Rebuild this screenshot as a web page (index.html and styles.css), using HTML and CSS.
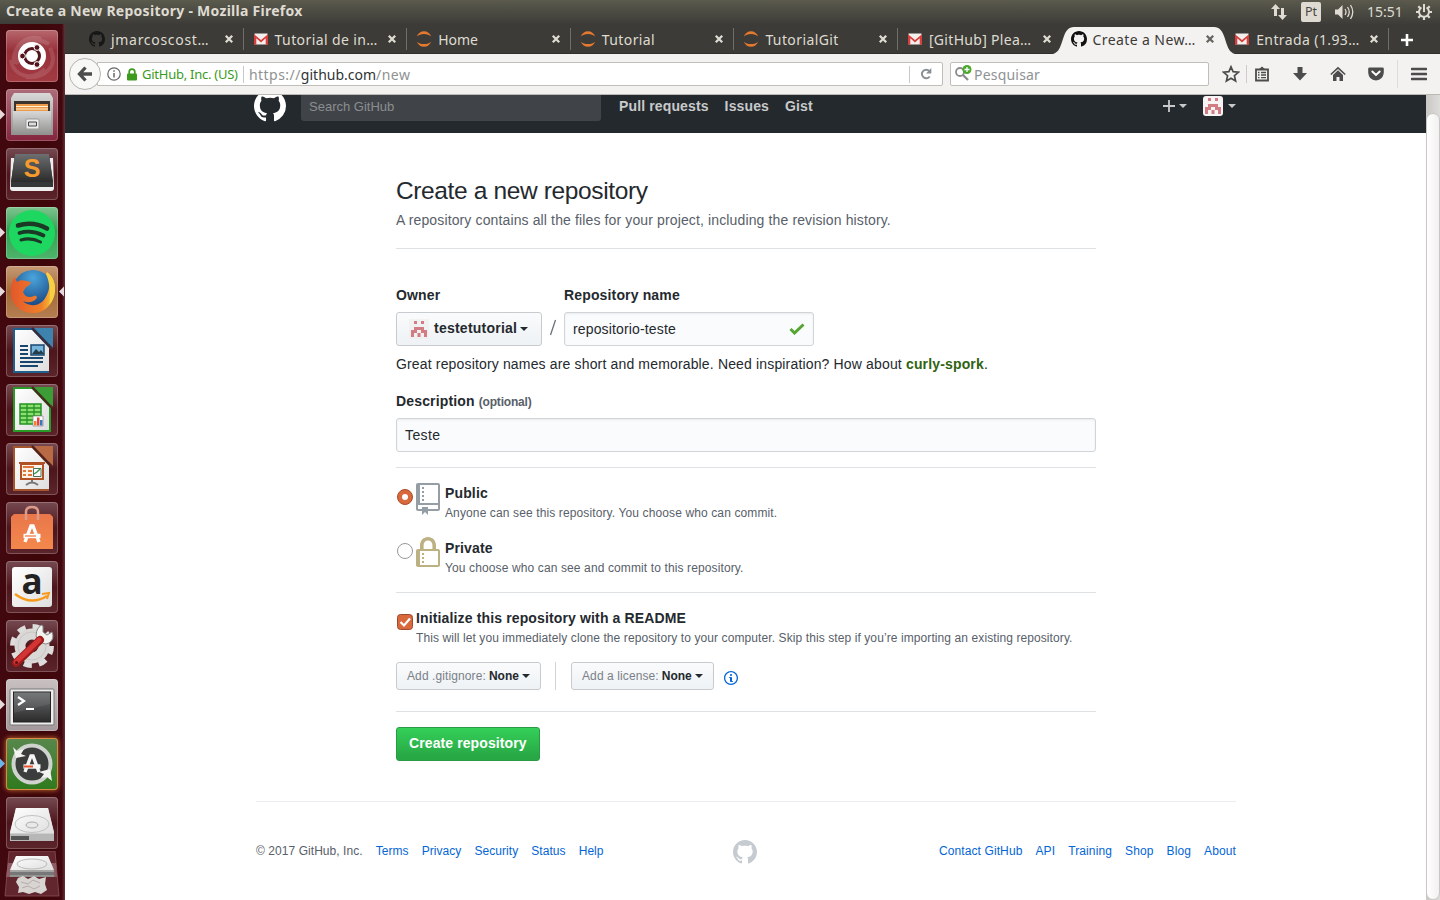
FILE: index.html
```html
<!DOCTYPE html>
<html lang="pt">
<head>
<meta charset="utf-8">
<title>Create a New Repository</title>
<link rel="stylesheet" href="styles.css">
</head>
<body>
<svg class="defs" width="0" height="0">
  <defs>
    <symbol id="octocat" viewBox="0 0 16 16"><path d="M8 0C3.58 0 0 3.58 0 8c0 3.54 2.29 6.53 5.47 7.59.4.07.55-.17.55-.38 0-.19-.01-.82-.01-1.49-2.01.37-2.53-.49-2.69-.94-.09-.23-.48-.94-.82-1.13-.28-.15-.68-.52-.01-.53.63-.01 1.08.58 1.23.82.72 1.21 1.87.87 2.33.66.07-.52.28-.87.51-1.07-1.78-.2-3.64-.89-3.64-3.95 0-.87.31-1.59.82-2.15-.08-.2-.36-1.02.08-2.12 0 0 .67-.21 2.2.82.64-.18 1.32-.27 2-.27.68 0 1.36.09 2 .27 1.53-1.04 2.2-.82 2.2-.82.44 1.1.16 1.92.08 2.12.51.56.82 1.27.82 2.15 0 3.07-1.87 3.75-3.65 3.95.29.25.54.73.54 1.48 0 1.07-.01 1.93-.01 2.2 0 .21.15.46.55.38A8.013 8.013 0 0 0 16 8c0-4.42-3.58-8-8-8z"/></symbol>
    <symbol id="gmail" viewBox="0 0 16 16"><rect x="1.5" y="2.5" width="13" height="11" fill="#f3efec"/><path d="M1 13.7V3.2L8 9l7-5.800v10.500h-2.300V7.200L8 11.500 3.300 7.200v6.500z" fill="#d63f3d"/></symbol>
    <symbol id="jupyter" viewBox="0 0 16 16"><path d="M.8 5.5C2 2.200 4.800.2 8 .2s6 2 7.200 5.300C13.500 3.700 11 2.900 8 2.900S2.500 3.700.8 5.500zM.8 10.500C2 13.800 4.800 15.800 8 15.800s6-2 7.200-5.300c-1.700 1.800-4.200 2.600-7.200 2.600s-5.500-.8-7.200-2.600z" fill="#e5792f"/></symbol>
    <symbol id="close" viewBox="0 0 10 10"><path d="M1.800 1.800l6.400 6.400M8.200 1.800L1.800 8.200" stroke="currentColor" stroke-width="2.300" fill="none"/></symbol>
    <symbol id="identicon" viewBox="0 0 20 20"><path fill="#d27d84" d="M5 2h3v3H5zM12 2h3v3h-3zM5 8h10v3H5zM2 11h6v3H2zM12 11h6v3h-6zM2 14h3v4H2zM8.500 14h3v4h-3zM15 14h3v4h-3z"/></symbol>
    <linearGradient id="paper" x1="0" y1="0" x2="1" y2="1"><stop offset="0" stop-color="#fff"/><stop offset="1" stop-color="#dedede"/></linearGradient>
    <linearGradient id="steel" x1="0" y1="0" x2="0" y2="1"><stop offset="0" stop-color="#d8d8d8"/><stop offset="1" stop-color="#8f8f8d"/></linearGradient>
    <linearGradient id="dark" x1="0" y1="0" x2="0" y2="1"><stop offset="0" stop-color="#6c6e70"/><stop offset="1" stop-color="#2b2b2b"/></linearGradient>
    <linearGradient id="orange" x1="0" y1="0" x2="0" y2="1"><stop offset="0" stop-color="#e9764a"/><stop offset="1" stop-color="#f4884c"/></linearGradient>
    <radialGradient id="globe" cx=".5" cy=".2" r=".8"><stop offset="0" stop-color="#4aa5dc"/><stop offset="1" stop-color="#123a78"/></radialGradient>
    <linearGradient id="fox" x1="0" y1="0" x2="1" y2="0"><stop offset="0" stop-color="#e4572b"/><stop offset=".7" stop-color="#ee8129"/><stop offset="1" stop-color="#fbd33b"/></linearGradient>
    <symbol id="drive" viewBox="0 0 52 52"><path d="M10 11h32l6 24v8H4v-8z" fill="#cfcfcf"/><path d="M10 11h32l6 25H4z" fill="url(#paper)"/><ellipse cx="26" cy="27" rx="17" ry="8.500" fill="none" stroke="#c2c2c2"/><ellipse cx="26" cy="28" rx="6" ry="3" fill="#e8e8e8" stroke="#aaa"/><path d="M4 37h44v7H4z" fill="#b7b7b7"/><path d="M5 39h18v4H5z" fill="#555"/></symbol>
  </defs>
</svg>

<header class="panel">
  <span class="panel-title">Create a New Repository - Mozilla Firefox</span>
  <div class="indicators">
    <svg class="ind-net" width="18" height="18" viewBox="0 0 18 18" fill="#dfdbd2"><path d="M5.500 1L10 6H7v7H4V6H1zM12.500 17L8 12h3V5h3v7h3z"/></svg>
    <span class="kbd">Pt</span>
    <svg class="ind-vol" width="21" height="18" viewBox="0 0 21 18"><path d="M1 6.500h3L8.500 2v14L4 11.500H1z" fill="#dfdbd2"/><path d="M11 6q2 3 0 6M13.500 4q3.500 5 0 10M16.500 2q4.500 7 0 14" fill="none" stroke="#dfdbd2" stroke-width="1.300"/></svg>
    <span class="clock">15:51</span>
    <svg class="ind-gear" width="18" height="18" viewBox="0 0 18 18" fill="none" stroke="#dfdbd2"><path d="M6.500 4.500a5 5 0 1 0 5 0M9 1v8" stroke-width="2"/><path d="M1 9h3M14 9h3M3.300 3.300l2 2M14.700 3.300l-2 2M3.300 14.700l2-2M14.700 14.700l-2-2M9 14v3" stroke-width="2.200"/></svg>
  </div>
</header>

<div class="desktop">
  <nav class="launcher">
    <svg class="tile t-dash" viewBox="0 0 52 52"><g fill="none" stroke="#fff" stroke-opacity=".12" stroke-width="4"><path d="M8 34C5 14 24 4 43 14M44 18c9 18-5 31-24 29M35 9c-18-6-31 12-23 25M39 39C26 52 7 46 5 30"/></g><circle cx="26" cy="26" r="14" fill="#fff"/><circle cx="26" cy="26" r="7.500" fill="none" stroke="#53141c" stroke-width="3"/><g fill="#53141c" stroke="#fff"><circle cx="16.500" cy="26" r="2.900"/><circle cx="31" cy="17.500" r="2.900"/><circle cx="31" cy="34.500" r="2.900"/></g></svg>
    <svg class="tile t-files" viewBox="0 0 52 52"><path d="M-6 20.500l5 5-5 5z" fill="#e6d9db"/><path d="M8 4h36l3 5v37H5V9z" fill="url(#steel)"/><path d="M8 12h36v12H8z" fill="#3b332e"/><path d="M10 15h32v7H10z" fill="#ec9a4c"/><path d="M10 17.500h32M10 20h32" stroke="#fff0cf" stroke-width="1.200"/><path d="M7 22h38v24H7z" fill="url(#steel)"/><rect x="20" y="30" width="13" height="10" rx="1" fill="#eee" stroke="#999"/><path d="M22.500 33h8v4h-8z" fill="#ddd" stroke="#444"/></svg>
    <svg class="tile t-sublime" viewBox="0 0 52 52"><path d="M5 10h42l1 30q0 3-3 3H7q-3 0-3-3z" fill="#eee"/><path d="M9 6h34l4 29v4H5v-4z" fill="#343638"/><path d="M9 6h34l4 28H5z" fill="url(#dark)"/><text x="26" y="29" class="ico-s">S</text></svg>
    <svg class="tile t-spotify" viewBox="0 0 52 52"><path d="M-6 20.500l5 5-5 5z" fill="#e6d9db"/><circle cx="26" cy="26" r="23" fill="#1ed760"/><g fill="none" stroke="#1b3a26" stroke-linecap="round"><path d="M12 18.500q15-4.500 29 3" stroke-width="4.600"/><path d="M13.500 26q12-3.500 24 2.500" stroke-width="3.800"/><path d="M15 33q10-3 19.500 2" stroke-width="3"/></g></svg>
    <svg class="tile t-firefox" viewBox="0 0 52 52"><path d="M-6 20.500l5 5-5 5zM58 20.500l-5 5 5 5z" fill="#e6d9db"/><circle cx="27" cy="24" r="20" fill="url(#globe)"/><path d="M41 6c8 6 10 17 6 27-4 9-12 15-21 14C12 46 4 36 5 24c0-6 2-10 4-13l2 5c3-2 6-2 9-1l5 1c-1 3-3 4-5 5l-3 5c2 5 6 6 11 4 2-1 4 1 2 3-4 4-9 4-13 2 4 5 14 6 20 0 6-7 9-18 4-29z" fill="url(#fox)"/><path d="M41 6c8 6 10 17 6 27q-1 3-4 6c2-10 1-22-3-31z" fill="#f8cf42"/></svg>
    <svg class="tile t-doc" viewBox="0 0 52 52"><path d="M7 3h36v45H7z" fill="#1d5f8d"/><path d="M28 3h19v20z" fill="#3d83ad"/><path d="M9 5h17l17 18v23H9z" fill="url(#paper)"/><path d="M26 3l20 21" stroke="#3c2a38" stroke-width="2.500"/><g stroke="#17476f" stroke-width="2"><path d="M14 21h8M14 25h8M14 29h8M14 33h23M14 37h23M14 41h18"/></g><path d="M25 20h13v10H25z" fill="#76b4dc" stroke="#17476f" stroke-width="1.500"/><path d="M26 29l4-5 3 3 2-2 3 4z" fill="#243d48"/></svg>
    <svg class="tile t-doc" viewBox="0 0 52 52"><path d="M7 3h38v45H7z" fill="#279b25"/><path d="M28 3h19v20z" fill="#3c9d36"/><path d="M9 5h17l17 18v23H9z" fill="url(#paper)"/><path d="M26 3l20 21" stroke="#4a2a20" stroke-width="2.500"/><path d="M14 20h21v20H14z" fill="#8ce070" stroke="#269125" stroke-width="1.500"/><path d="M14 24h21M14 28h21M14 32h21M14 36h21M21 20v20M28 20v20" stroke="#269125" stroke-width="1.300"/><path d="M27 32h10v10H27z" fill="#fff" stroke="#888" stroke-width=".7"/><path d="M28 37h2.500v4.500H28z" fill="#f37f36"/><path d="M31 33.500h2.500v8H31z" fill="#e2433d"/><path d="M34 36h2.500v5.500H34z" fill="#3878b8"/></svg>
    <svg class="tile t-doc" viewBox="0 0 52 52"><path d="M7 3h36v45H7z" fill="#a5552b"/><path d="M28 3h19v20z" fill="#b76a43"/><path d="M9 5h17l17 18v23H9z" fill="url(#paper)"/><path d="M26 3l20 21" stroke="#4f2220" stroke-width="2.500"/><path d="M15 21h22v15H15z" fill="#fff1e6" stroke="#b25025" stroke-width="2"/><path d="M13 20h26" stroke="#b25025" stroke-width="2"/><path d="M17 24h11M17 28h3M22 28h4M17 32h3M22 32h4" stroke="#e07738" stroke-width="2"/><path d="M27.500 25.500h7.500v8h-7.500z" fill="#fff" stroke="#46735b"/><path d="M28 31l3-2 3-3" fill="none" stroke="#389448" stroke-width="1.500"/><path d="M26 37v3M20 42q6-5 12 0" stroke="#777" stroke-width="2" fill="none"/></svg>
    <svg class="tile t-store" viewBox="0 0 52 52"><path d="M5 15l3-3h36l3 3v32H5z" fill="url(#orange)"/><path d="M20 18v-8q0-5 6-5t6 5v8" fill="none" stroke="#dc9a88" stroke-width="2.500"/><g fill="none" stroke="#fff" stroke-width="3.400"><path d="M19 40l6-16h2l6 16"/><path d="M17.500 34h17" stroke-width="4.400"/></g><path d="M19 34h11" stroke="#ef7e4a" stroke-width="1.300"/></svg>
    <svg class="tile t-amazon" viewBox="0 0 52 52"><rect x="6" y="6" width="40" height="40" rx="3" fill="url(#paper)"/><text x="26" y="33" class="ico-a">a</text><path d="M9 33q16 12 32 2" fill="none" stroke="#f79a1c" stroke-width="2.500"/><path d="M36 33l7-1-2 6" fill="none" stroke="#f79a1c" stroke-width="2"/></svg>
    <svg class="tile t-tools" viewBox="0 0 52 52"><circle cx="26" cy="26" r="18" fill="none" stroke="#dedddb" stroke-width="8" stroke-dasharray="7.540 6.600"/><circle cx="26" cy="26" r="12" fill="none" stroke="#d9d8d6" stroke-width="11"/><circle cx="26" cy="26" r="14" fill="none" stroke="#c9c7c5"/><path d="M31 20q-3-9 4-15l2 1v6l4 3 5-3q3 7-3 11-3 2-7 0z" fill="#f1f1f0" stroke="#888"/><path d="M10 43L34 20" stroke="#9d1b1b" stroke-width="8" stroke-linecap="round"/><path d="M10 42L33 20" stroke="#d33535" stroke-width="5" stroke-linecap="round"/><circle cx="10.500" cy="42.500" r="1.500" fill="#5c1111"/></svg>
    <svg class="tile t-term" viewBox="0 0 52 52"><path d="M-6 20.500l5 5-5 5z" fill="#e6d9db"/><rect x="4" y="10" width="44" height="36" rx="1" fill="#eee" stroke="#777"/><rect x="7.500" y="13" width="37" height="30" fill="url(#dark)" stroke="#222"/><path d="M8 13h36v12L8 34z" fill="#fff" opacity=".08"/><path d="M12 18l6 4-6 4" fill="none" stroke="#fff" stroke-width="2.200"/><path d="M20 30h8" stroke="#fff" stroke-width="2"/></svg>
    <svg class="tile t-update" viewBox="0 0 52 52"><path d="M-6 20.500l5 5-5 5z" fill="#6cb6e6"/><circle cx="26" cy="26" r="17" fill="#3b3d3c"/><circle cx="26" cy="26" r="18.500" fill="none" stroke="#cfd2ce" stroke-width="4"/><path d="M7 9l3 11 10-2-5-2 3-5-7 2zM46 43l-2-12-11 3 5 2-3 4 6-1z" fill="#f3f3f2"/><g fill="none" stroke="#f5f5f5" stroke-width="3.400"><path d="M19 34l6-16h2l6 16"/><path d="M17.500 28.500h17" stroke-width="4.400"/></g><path d="M18 28.500h9" stroke="#e8502c" stroke-width="2"/></svg>
    <svg class="tile t-drive" viewBox="0 0 52 52"><use href="#drive"/></svg>
    <svg class="stack" viewBox="0 0 56 46"><path d="M5 0h46l4 45H1z" fill="#62262e" stroke="#8d5a61" stroke-width=".7"/><path d="M4 12h48l1 14H2z" fill="#8d5c63"/><path d="M12 6h32l6 14v6H6v-6z" fill="url(#steel)"/><path d="M12 5h32l6 14H6z" fill="url(#paper)"/><ellipse cx="28" cy="13" rx="15" ry="5" fill="none" stroke="#bbb"/><path d="M6 22.500h44" stroke="#777" stroke-width="3"/><path d="M14 27l5-2 5 3 6-3 5 3 7-2-1 7 2 6-6 4-6-2-6 2-6-2-5 1 1-6-3-5z" fill="#d8d4d2"/><path d="M17 31l7 2 5-4 7 3M18 37l6-2 6 3 6-3" stroke="#b5adab" fill="none"/></svg>
  </nav>

  <div class="browser">
    <div class="tabs">
      <div class="tab"><svg class="fav fav-dark"><use href="#octocat"/></svg><span class="tab-t w-a">jmarcoscost…</span><svg class="x"><use href="#close"/></svg></div>
      <div class="tab"><svg class="fav"><use href="#gmail"/></svg><span class="tab-t">Tutorial de in…</span><svg class="x"><use href="#close"/></svg></div>
      <div class="tab"><svg class="fav"><use href="#jupyter"/></svg><span class="tab-t w-c">Home</span><svg class="x"><use href="#close"/></svg></div>
      <div class="tab"><svg class="fav"><use href="#jupyter"/></svg><span class="tab-t">Tutorial</span><svg class="x"><use href="#close"/></svg></div>
      <div class="tab"><svg class="fav"><use href="#jupyter"/></svg><span class="tab-t">TutorialGit</span><svg class="x"><use href="#close"/></svg></div>
      <div class="tab no-sep"><svg class="fav"><use href="#gmail"/></svg><span class="tab-t w-f">[GitHub] Plea…</span><svg class="x"><use href="#close"/></svg></div>
      <div class="tab active"><svg class="tab-shape" width="192" height="29" viewBox="0 0 192 29"><path d="M0 29C12 28 12 21 16 10 19 2 22 1 28 1H164C170 1 173 2 176 10 180 21 180 28 192 29z" fill="#f3f2f0"/></svg><svg class="fav"><use href="#octocat"/></svg><span class="tab-t">Create a New…</span><svg class="x"><use href="#close"/></svg></div>
      <div class="tab"><svg class="fav"><use href="#gmail"/></svg><span class="tab-t">Entrada (1.93…</span><svg class="x"><use href="#close"/></svg></div>
      <svg class="plus" width="14" height="14" viewBox="0 0 14 14"><path d="M7 1v12M1 7h12" stroke="#fff" stroke-width="2.600"/></svg>
    </div>

    <div class="toolbar">
      <div class="back"><svg width="18" height="18" viewBox="0 0 18 18"><path d="M9.500 2.500L3.500 9l6 6.500M4 9h12" fill="none" stroke="#4c4c4c" stroke-width="3.300"/></svg></div>
      <div class="urlbar">
        <svg class="u-info" width="14" height="14" viewBox="0 0 14 14"><circle cx="7" cy="7" r="6.200" fill="none" stroke="#666" stroke-width="1.200"/><path d="M7 6v4.500M7 3.300v1.500" stroke="#666" stroke-width="1.500"/></svg>
        <svg class="u-lock" width="10" height="13" viewBox="0 0 10 13"><path d="M2.200 6V4a2.800 2.800 0 0 1 5.600 0v2" fill="none" stroke="#3c9a1d" stroke-width="1.700"/><rect y="5.500" width="10" height="7" rx="1" fill="#3c9a1d"/></svg>
        <span class="ident">GitHub, Inc. (US)</span>
        <span class="url"><span class="dim">https://</span>github.com<span class="dim">/new</span></span>
        <span class="reload"><svg width="14" height="14" viewBox="0 0 14 14"><path d="M10.700 9.500A4.300 4.300 0 1 1 10.300 4" fill="none" stroke="#8a8f96" stroke-width="2"/><path d="M12.300 1v5.500H7z" fill="#8a8f96"/></svg></span>
      </div>
      <div class="searchbar"><svg width="20" height="20" viewBox="0 0 20 20"><circle cx="8" cy="8" r="4" fill="none" stroke="#8c8c8c" stroke-width="1.800"/><path d="M11 11l5 5" stroke="#8c8c8c" stroke-width="2.300"/><circle cx="15" cy="5.500" r="4.500" fill="#4aa92b"/><path d="M15 3v5M12.500 5.500h5" stroke="#fff" stroke-width="1.300"/></svg><span class="pesq">Pesquisar</span></div>
      <div class="tools">
        <svg class="i-star" width="18" height="18" viewBox="0 0 18 18"><path d="M9 1.800l2.100 4.900 5.300.5-4 3.500 1.200 5.200L9 13.200l-4.600 2.700 1.200-5.200-4-3.500 5.300-.5z" fill="none" stroke="#4c4c4c" stroke-width="1.700"/></svg>
        <i class="v1"></i>
        <svg class="i-clip" width="16" height="16" viewBox="0 0 16 16"><path d="M2 3.500h12v11H2z" fill="none" stroke="#4c4c4c" stroke-width="1.800"/><path d="M4 4l4-3.500L12 4z" fill="#4c4c4c"/><path d="M4 6.500h1.500M7 6.500h5M4 9h1.500M7 9h5M4 11.700h1.500M7 11.700h5" stroke="#4c4c4c" stroke-width="1.300"/></svg>
        <svg class="i-down" width="16" height="16" viewBox="0 0 16 16"><path d="M5.500 1h5v6H15l-7 7.500L1 7h4.500z" fill="#4c4c4c"/></svg>
        <svg class="i-home" width="16" height="16" viewBox="0 0 16 16"><path d="M.8 8.500L8 1.800l7.200 6.700" fill="none" stroke="#4c4c4c" stroke-width="1.600"/><path d="M3 9l5-4.700L13 9v6H9.500v-4h-3v4H3z" fill="#4c4c4c"/></svg>
        <svg class="i-pocket" width="16" height="16" viewBox="0 0 16 16"><path d="M1.500 1.500h13q1.300 0 1.300 1.300v4Q15 14 8 14.500.8 14 .2 6.800v-4q0-1.300 1.300-1.300z" fill="#4c4c4c"/><path d="M4.300 5.500L8 9l3.700-3.500" fill="none" stroke="#fff" stroke-width="1.900" stroke-linecap="round"/></svg>
        <i class="v2"></i>
        <svg class="i-menu" width="16" height="14" viewBox="0 0 16 14"><path d="M1 2h14M1 7h14M1 12h14" stroke="#4c4c4c" stroke-width="2.600" stroke-linecap="round"/></svg>
      </div>
    </div>

    <div class="view">
      <div class="page">
        <div class="gh-head">
          <svg class="gh-logo"><use href="#octocat"/></svg>
          <div class="gh-search">Search GitHub</div>
          <span class="n1">Pull requests</span><span class="n2">Issues</span><span class="n3">Gist</span>
          <div class="gh-user">
            <svg width="12" height="12" viewBox="0 0 12 12"><path d="M6 0v12M0 6h12" stroke="#c8c9ca" stroke-width="1.800"/></svg><i class="caret"></i>
            <svg class="avatar"><use href="#identicon"/></svg><i class="caret c2"></i>
          </div>
        </div>

        <main class="form">
          <h1><span>Create a new repository</span></h1>
          <p class="sub">A repository contains all the files for your project, including the revision history.</p>
          <div class="row labels"><b class="l-owner">Owner</b><b class="l-repo">Repository name</b></div>
          <div class="row fields">
            <div class="btn owner"><svg class="av2"><use href="#identicon"/></svg><b>testetutorial</b><i class="caret"></i></div>
            <svg class="slash" width="22" height="20" viewBox="0 0 22 20"><path d="M8.500 16L13.500 1" stroke="#6a727a" stroke-width="1.300"/></svg>
            <div class="input repo"><span class="rt">repositorio-teste</span><svg width="16" height="12" viewBox="0 0 16 12"><path d="M1.500 6l4 4L14.500 1.500" fill="none" stroke="#55a532" stroke-width="3"/></svg></div>
          </div>
          <p class="note">Great repository names are short and memorable. Need inspiration? How about <b>curly-spork</b>.</p>
          <p class="desc-label"><b>Description</b> <small>(optional)</small></p>
          <div class="input desc">Teste</div>
          <hr class="hr1">
          <div class="choice">
            <svg class="radio" viewBox="0 0 16 16"><circle cx="8" cy="8" r="7.500" fill="#d9683d" stroke="#a94a26"/><circle cx="8" cy="8" r="3" fill="#fff"/></svg>
            <svg class="oct" viewBox="0 0 12 16" fill="#959da5"><path d="M4 9H3V8h1v1zm0-3H3v1h1V6zm0-2H3v1h1V4zm0-2H3v1h1V2zm8-1v12c0 .55-.45 1-1 1H6v2l-1.500-1.500L3 16v-2H1c-.55 0-1-.45-1-1V1c0-.55.45-1 1-1h10c.55 0 1 .45 1 1zm-1 10H1v2h2v-1h3v1h5v-2zm0-10H2v9h9V1z"/></svg>
            <div><b>Public</b><p class="s-pub">Anyone can see this repository. You choose who can commit.</p></div>
          </div>
          <div class="choice private">
            <svg class="radio" viewBox="0 0 16 16"><circle cx="8" cy="8" r="7.500" fill="#fff" stroke="#999"/></svg>
            <svg class="oct" viewBox="0 0 12 16" fill="#bcb183"><path d="M4 13H3v-1h1v1zm8-6v7c0 .55-.45 1-1 1H1c-.55 0-1-.45-1-1V7c0-.55.45-1 1-1h1V4c0-2.200 1.800-4 4-4s4 1.800 4 4v2h1c.55 0 1 .45 1 1zM3.800 6h4.410V4c0-1.220-.98-2.200-2.200-2.200-1.220 0-2.200.98-2.200 2.200v2H3.800zM11 7H2v7h9V7zM4 8H3v1h1V8zm0 2H3v1h1v-1z"/></svg>
            <div><b>Private</b><p class="s-prv">You choose who can see and commit to this repository.</p></div>
          </div>
          <hr class="hr2">
          <div class="choice init">
            <svg class="checkbox" viewBox="0 0 16 16"><rect x=".5" y=".5" width="15" height="15" rx="3" fill="#d9683d" stroke="#9c4a2f"/><path d="M3.500 8l3.500 3.500L13 4.500" fill="none" stroke="#fff" stroke-width="2.200"/></svg>
            <div><b>Initialize this repository with a README</b><p class="s-ini">This will let you immediately clone the repository to your computer. Skip this step if you’re importing an existing repository.</p></div>
          </div>
          <div class="row opts">
            <div class="btn small ign"><span>Add .gitignore:</span><b>None</b><i class="caret"></i></div>
            <i class="vsep"></i>
            <div class="btn small lic"><span>Add a license:</span><b>None</b><i class="caret"></i></div>
            <svg class="info" viewBox="0 0 14 16" fill="#0366d6"><path d="M6.300 5.690a.942.942 0 0 1-.28-.7c0-.28.09-.52.28-.7.19-.18.42-.28.7-.28.28 0 .52.09.7.28.18.19.28.42.28.7 0 .28-.09.52-.28.7a1 1 0 0 1-.7.3c-.28 0-.52-.11-.7-.3zM8 7.990c-.02-.25-.11-.48-.31-.69-.2-.19-.42-.3-.69-.31H6c-.27.02-.48.13-.69.31-.2.2-.3.44-.31.69h1v3c.02.27.11.5.31.69.2.2.42.31.69.31h1c.27 0 .48-.11.69-.31.2-.19.3-.42.31-.69H8V7.980v.01zM7 2.300c-3.140 0-5.700 2.540-5.700 5.680 0 3.140 2.560 5.700 5.700 5.700s5.700-2.550 5.700-5.700c0-3.150-2.560-5.690-5.700-5.690v.01zM7 .98c3.860 0 7 3.140 7 7s-3.140 7-7 7-7-3.120-7-7 3.140-7 7-7z"/></svg>
          </div>
          <hr class="hr3">
          <div class="create"><span>Create repository</span></div>
        </main>

        <footer class="foot">
          <span class="copy">© 2017 GitHub, Inc.</span>
          <a>Terms</a><a>Privacy</a><a>Security</a><a>Status</a><a>Help</a>
          <svg class="foot-logo"><use href="#octocat"/></svg>
          <a class="push">Contact GitHub</a><a>API</a><a>Training</a><a>Shop</a><a>Blog</a><a>About</a>
        </footer>
      </div>
      <div class="scroll"><div class="thumb"></div></div>
    </div>
  </div>
</div>
</body>
</html>
```
FILE: styles.css
```css
* { box-sizing: border-box; }
body { margin: 0; width: 1440px; height: 900px; overflow: hidden; display: flex; flex-direction: column; font-family: "Liberation Sans", Arial, sans-serif; font-size: 14px; color: #24292e; background: #fff; }
p, h1, hr { margin: 0; }
svg { display: block; flex: none; }
i { display: block; flex: none; }
.defs { position: absolute; }
span, b, a { white-space: nowrap; }

/* desktop panel */
.panel { height: 24px; flex: none; display: flex; align-items: center; justify-content: space-between; padding: 0 7px 0 6px; background: linear-gradient(#5b5a4d, #3d3c38); font-family: "Noto Sans", sans-serif; color: #dfdbd2; }
.panel-title { font-weight: 700; font-size: 14px; letter-spacing: .27px; line-height: 20px; padding-bottom: 2px; }
.indicators { display: flex; align-items: center; }
.ind-net { margin-right: -1px; }
.kbd { width: 20px; height: 20px; margin-left: 14px; border-radius: 2px; background: #dfdbd2; color: #46453f; font-size: 12.500px; line-height: 20px; text-align: center; }
.ind-vol { margin-left: 13px; }
.clock { margin-left: 12px; font-size: 14px; width: 36px; line-height: 22px; padding-bottom: 1px; }
.ind-gear { margin-left: 12px; }

.desktop { flex: 1; display: flex; min-height: 0; }

/* launcher */
.launcher { width: 65px; flex: none; padding: 6px 0 0 6px; background: linear-gradient(90deg, #42080f, #3d0608 60%, #42080f 95%, #63343a); display: flex; flex-direction: column; gap: 7px; }
.tile { width: 52px; height: 52px; border-radius: 4px; box-shadow: inset 0 0 0 1px rgba(255,255,255,.22); background: linear-gradient(#764a51, #4d161c 50%, #5b252b); overflow: visible; }
.t-dash { background: linear-gradient(#b7686e, #98303a 40%, #a33b43); }
.t-files { background: linear-gradient(#ad6c7a, #84253d); }
.t-spotify { background: linear-gradient(#7fc58f, #35a054 45%, #4db56b); }
.t-firefox { background: linear-gradient(#c69a75, #a56936 50%, #b57f53); }
.t-term { background: linear-gradient(#c9c0c2, #a2989b); }
.t-update { background: linear-gradient(#58874d, #2e7a1d); box-shadow: 0 0 4px 1px #a55628, inset 0 0 0 1px #dc8b47; }
.stack { width: 56px; height: 46px; margin: -5px 0 0 -2px; }
.ico-s { font: 700 25px "Liberation Sans", sans-serif; fill: #f59a2c; text-anchor: middle; }
.ico-a { font: 700 35px "Open Sans", sans-serif; fill: #222; text-anchor: middle; }

/* tabs */
.browser { flex: 1; display: flex; flex-direction: column; min-width: 0; }
.tabs { height: 30px; flex: none; display: flex; align-items: center; padding-left: 15px; background: #3c3b37; border-bottom: 1px solid #302f2c; font-family: "Noto Sans", sans-serif; font-size: 14px; letter-spacing: .4px; color: #dfdbd2; }
.tab { position: relative; width: 163.600px; height: 22px; display: flex; align-items: center; padding: 0 9px 0 9px; border-right: 1px solid #6f6e69; }
.no-sep, .active { border-right-color: transparent; }
.fav { width: 16px; height: 16px; margin-right: 6px; position: relative; }
.fav-dark { fill: #171717; }
.tab-t { position: relative; flex: 1; min-width: 0; line-height: 20px; padding-top: 2px; }
.w-a { letter-spacing: .7px; }
.w-c { letter-spacing: 0; }
.w-f { letter-spacing: .3px; }
.x { width: 10px; height: 10px; margin-top: 1px; position: relative; }
.active { color: #3c3b37; }
.active .x { color: #65645f; }
.active .fav { fill: #111; }
.tab-shape { position: absolute; left: -14px; top: -2px; }
.plus { margin-left: 11px; margin-top: 2px; }

/* toolbar */
.toolbar { height: 41px; flex: none; display: flex; align-items: center; padding-left: 4px; background: #f3f2f0; border-bottom: 1px solid #bbb9b4; font-family: "Noto Sans", sans-serif; font-size: 14px; }
.back { width: 32px; height: 32px; flex: none; border: 1px solid #b5b3ad; border-radius: 50%; background: #f8f8f7; display: flex; align-items: center; justify-content: center; z-index: 1; }
.urlbar { width: 846px; height: 24px; margin-left: -4px; flex: none; display: flex; align-items: center; border: 1px solid #c0beb9; border-radius: 0 2px 2px 0; background: #fff; padding-left: 9px; }
.u-lock { margin-left: 6px; }
.ident { margin-left: 5px; font-size: 13px; letter-spacing: -.25px; color: #3c9a1d; width: 101px; }
.url { flex: 1; border-left: 1px solid #c8c8c8; padding-left: 5px; line-height: 17px; color: #2e3436; }
.dim { color: #8f9293; letter-spacing: .45px; }
.reload { width: 33px; height: 17px; border-left: 1px solid #c8c8c8; display: flex; align-items: center; justify-content: center; }
.searchbar { width: 259px; height: 24px; margin-left: 7px; flex: none; border: 1px solid #c0beb9; background: #fff; border-radius: 2px; display: flex; align-items: center; gap: 2px; padding-left: 1px; color: #8f9293; letter-spacing: .2px; }
.tools { flex: 1; display: flex; align-items: center; padding-left: 13px; }
.v1 { width: 1px; height: 18px; background: #ccc; margin: 0 7px 0 6px; }
.v2 { width: 1px; height: 28px; background: #ddd; margin: 0 13px 0 13px; }
.i-down, .i-home, .i-pocket { margin-left: 22px; }

/* page */
.view { flex: 1; display: flex; min-height: 0; overflow: hidden; background: #fff; }
.page { width: 1361px; flex: none; display: flex; flex-direction: column; }
.gh-head { width: 100%; height: 54px; margin-top: -16px; flex: none; background: #24292e; display: flex; align-items: center; padding: 0 190px 0 189px; color: #c8c9ca; font-weight: 700; font-size: 14px; letter-spacing: .13px; }
.gh-logo { width: 32px; height: 32px; fill: #fff; }
.gh-search { width: 300px; height: 28px; margin: 1px 18px 0 15px; border-radius: 3px; background: #404448; color: #8b8e91; font-weight: 400; font-size: 13px; line-height: 27px; padding-left: 8px; letter-spacing: 0; }
.n2, .n3 { margin-left: 16px; }
.gh-user { margin-left: auto; display: flex; align-items: center; padding-bottom: 1px; }
.gh-user .avatar { width: 20px; height: 20px; margin-left: 16px; background: #f8f4f4; border-radius: 3px; }
.caret { width: 0; height: 0; border: 4px solid transparent; border-top-color: currentColor; border-bottom: 0; margin-left: 4px; }
.c2 { margin-left: 5px; }

.form { width: 700px; padding-top: 43px; margin-left: 331px; letter-spacing: .15px; }
b { letter-spacing: .15px; }
h1 { font-size: 24.500px; letter-spacing: -.37px; font-weight: 400; line-height: 30px; }
.sub { margin-top: 4px; line-height: 20px; padding-bottom: 18px; border-bottom: 1px solid #dfe2e5; color: #586069; white-space: nowrap; letter-spacing: .13px; }
.row { display: flex; align-items: center; }
.labels { margin-top: 36px; line-height: 20px; }
.l-owner { width: 168px; }
.fields { margin-top: 7px; height: 34px; }
.btn { display: flex; align-items: center; border: 1px solid #c8cbce; border-radius: 3px; background: linear-gradient(#fafbfc, #eff3f6 90%); }
.owner { width: 146px; height: 34px; padding-left: 12px; }
.owner b { letter-spacing: .24px; padding-bottom: 2px; }
.owner .caret { margin-left: 3px; }
.av2 { width: 20px; height: 20px; margin-right: 5px; background: rgba(240,236,236,.6); }
.input { height: 34px; border: 1px solid #d1d5da; border-radius: 3px; background: #fafbfc; box-shadow: inset 0 1px 2px rgba(27,31,35,.075); padding: 0 8px; display: flex; align-items: center; justify-content: space-between; }
.repo { width: 250px; }
.note { margin-top: 8px; line-height: 20px; white-space: nowrap; letter-spacing: .157px; }
.note b { color: #2f6410; letter-spacing: .15px; }
.desc-label { margin-top: 17px; line-height: 20px; height: 20px; }
small { font-size: 12px; font-weight: 700; letter-spacing: -.18px; color: #586069; }
.desc { margin-top: 7px; width: 700px; letter-spacing: .4px; }
hr { border: 0; height: 1px; background: #dfe2e5; }
.hr1, .hr2 { margin-bottom: 15px; }
.hr1 { margin-top: 15px; }
.hr2 { margin-top: 14px; }
.hr3 { margin: 21px 0 15px; }
.choice { display: flex; align-items: flex-start; line-height: 20px; height: 40px; }
.choice b { letter-spacing: .14px; }
.choice p { font-size: 12px; color: #586069; white-space: nowrap; letter-spacing: .12px; }
.choice .s-ini { letter-spacing: .093px; }
.radio { width: 16px; height: 16px; margin: 6px 3px 0 1px; }
.oct { width: 24px; height: 32px; margin-right: 5px; }
.private { margin-top: 15px; }
.private .oct { margin-top: -1px; }
.private .radio { margin-top: 5px; }
.checkbox { width: 16px; height: 16px; margin: 6px 3px 0 1px; }
.opts { margin-top: 14px; height: 28px; }
.small { height: 28px; font-size: 12px; padding-left: 10px; gap: 3px; color: #24292e; letter-spacing: .1px; }
.small b { letter-spacing: 0; }
.small span { color: #7b8087; }
.small .caret { margin-left: 0; }
.ign { width: 145px; }
.lic { width: 143px; }
.vsep { width: 1px; height: 28px; background: #cfd3d6; margin: 0 15px 0 14px; }
.info { width: 14px; height: 16px; margin: 4px 0 0 9.500px; }
.create { width: 144px; height: 34px; border: 1px solid #2a9a46; border-radius: 3px; background: linear-gradient(#34d058, #28a745 90%); color: #fff; font-weight: 700; line-height: 31px; padding-left: 12px; letter-spacing: .1px; }

.foot { width: 980px; margin: 40px 0 0 191px; padding-top: 39px; border-top: 1px solid #eaecef; display: flex; align-items: center; font-size: 12px; line-height: 20px; letter-spacing: .06px; color: #586069; height: 60px; }
.foot a { color: #0366d6; margin-left: 13px; }
.foot .push { margin-left: auto; letter-spacing: .1px; }
.foot .push ~ a { letter-spacing: .12px; }
.foot-logo { width: 24px; height: 24px; margin-top: 1px; fill: #c6cbd1; margin-left: 129px; }

.scroll { width: 14px; flex: none; padding-top: 18px; background: linear-gradient(90deg, #c9c8c5, #dddcda); }
.thumb { height: 100%; border: 1px solid #c9c7c3; border-radius: 7px; background: linear-gradient(90deg, #fff, #f1f1f0); }
```
